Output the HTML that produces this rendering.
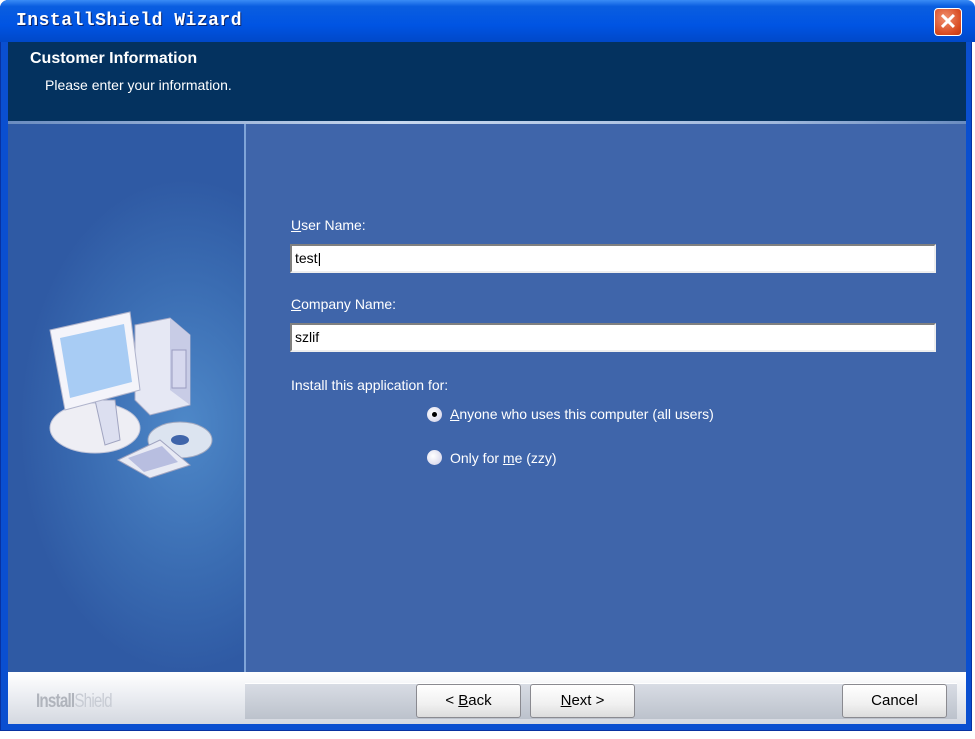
<!DOCTYPE html>
<html><head><style>
*{margin:0;padding:0;box-sizing:border-box}
body{width:975px;height:739px;background:#fff;position:relative;overflow:hidden;font-family:"Liberation Sans",sans-serif}
.win{position:absolute;left:0;top:0;width:972px;height:731px;background:#0a4fd0;border-radius:8px 8px 0 0;border:1px solid #0832a0}
.title{position:absolute;left:0;top:0;width:100%;height:42px;border-radius:8px 8px 0 0;background:linear-gradient(#3a8cf5 0%,#0a5ee0 15%,#0054e3 60%,#0048c8 100%)}
.title span{position:absolute;left:16px;top:11px;color:#fff;font:bold 18px "Liberation Mono",monospace;letter-spacing:0.5px;text-shadow:1px 1px #0a246a}
.close{position:absolute;left:934px;top:8px;width:28px;height:28px;border:1px solid #fff;border-radius:4px;background:radial-gradient(circle at 40% 35%,#f09070,#d84a20 70%,#c03810);color:#fff;font:bold 22px "Liberation Sans";text-align:center;line-height:26px}
.head{position:absolute;left:8px;top:42px;width:958px;height:79px;background:#04325f}
.head b{position:absolute;left:22px;top:8px;color:#fff;font-size:16px}
.head i{position:absolute;left:37px;top:35px;color:#fff;font-style:normal;font-size:14px}
.sep{position:absolute;left:8px;top:121px;width:958px;height:3px;background:linear-gradient(90deg,#6a8cc0,#c8d8ee 40%,#a0b8dc 80%,#6a8cc0)}
.main{position:absolute;left:8px;top:124px;width:958px;height:548px;background:#3f65aa}
.left{position:absolute;left:8px;top:124px;width:236px;height:548px;background:radial-gradient(ellipse 70% 45% at 75% 55%,#4e88c8,#3a6cb2 60%,#2f5aa4)}
.vl{position:absolute;left:244px;top:124px;width:2px;height:548px;background:#7fa4d8}
.lbl{position:absolute;color:#fff;font-size:14px}
.inp{position:absolute;left:290px;width:646px;height:29px;background:#fff;border:2px solid;border-color:#808080 #eee #eee #808080;font-size:14px;padding:4px 3px}
.radio{position:absolute;left:427px;width:15px;height:15px;border-radius:50%;background:radial-gradient(circle at 40% 40%,#fff,#dde 70%,#aab)}
.radio.on::after{content:"";position:absolute;left:5px;top:5px;width:5px;height:5px;border-radius:50%;background:#000}
.bot{position:absolute;left:8px;top:672px;width:958px;height:52px;background:linear-gradient(#fff,#eef0f4 40%,#d4d8e0)}
.brand{position:absolute;left:36px;top:691px;font:bold 19px "Liberation Sans Narrow","Liberation Sans";color:#b0b4bc;letter-spacing:-1px;transform:scaleX(.8);transform-origin:left}
.brand span{font-weight:normal;color:#c8ccd4}
.track{position:absolute;left:245px;top:683px;width:712px;height:36px;background:linear-gradient(#d8dce4,#bcc2cc);border-top:1px solid #fff}
.btn{position:absolute;top:684px;height:34px;background:linear-gradient(#fff,#f0f0f0 60%,#dcdcdc);border:1px solid #8a8a90;border-radius:3px;font-size:15px;text-align:center;line-height:32px;color:#000}
</style></head><body>
<div class="win"></div>
<div class="title"><span>InstallShield Wizard</span></div>
<div class="close">✕</div>
<div class="head"><b>Customer Information</b><i>Please enter your information.</i></div>
<div class="sep"></div>
<div class="main"></div>
<div class="left"></div>
<div class="vl"></div>
<svg style="position:absolute;left:40px;top:300px" width="180" height="180" viewBox="0 0 180 180">
<path d="M95 25 L130 18 L150 35 L150 105 L110 115 L95 100Z" fill="#e6e8f4" stroke="#a8acc8"/>
<path d="M130 18 L150 35 L150 105 L130 90Z" fill="#c8cce6"/>
<rect x="132" y="50" width="14" height="38" fill="#d6d8ee" stroke="#9a9cc0"/>
<ellipse cx="55" cy="128" rx="45" ry="25" fill="#eeeef4" stroke="#c0c4d8"/>
<path d="M55 100 L75 100 L80 140 L65 145Z" fill="#dcdff0" stroke="#a0a4c0"/>
<path d="M10 30 L90 12 L100 90 L25 110Z" fill="#f4f4fa" stroke="#b0b4cc"/>
<path d="M20 38 L84 24 L92 82 L30 98Z" fill="#a8ccf4"/>
<ellipse cx="140" cy="140" rx="32" ry="18" fill="#dce4f0" stroke="#a0a8c0"/>
<ellipse cx="140" cy="140" rx="9" ry="5" fill="#3f65aa"/>
<path d="M78 160 L120 140 L150 165 L110 178Z" fill="#e8eaf4" stroke="#a0a4c0"/>
<path d="M88 158 L122 146 L138 162 L104 172Z" fill="#b8bee0"/>
</svg>
<div class="lbl" style="left:291px;top:217px"><u>U</u>ser Name:</div>
<div class="inp" style="top:244px">test|</div>
<div class="lbl" style="left:291px;top:296px"><u>C</u>ompany Name:</div>
<div class="inp" style="top:323px">szlif</div>
<div class="lbl" style="left:291px;top:377px">Install this application for:</div>
<div class="radio on" style="top:407px"></div>
<div class="lbl" style="left:450px;top:406px"><u>A</u>nyone who uses this computer (all users)</div>
<div class="radio" style="top:450px"></div>
<div class="lbl" style="left:450px;top:450px">Only for <u>m</u>e (zzy)</div>
<div class="bot"></div>
<div class="brand">Install<span>Shield</span></div>
<div class="track"></div>
<div class="btn" style="left:416px;width:105px">&lt; <u>B</u>ack</div>
<div class="btn" style="left:530px;width:105px"><u>N</u>ext &gt;</div>
<div class="btn" style="left:842px;width:105px">Cancel</div>
</body></html>
